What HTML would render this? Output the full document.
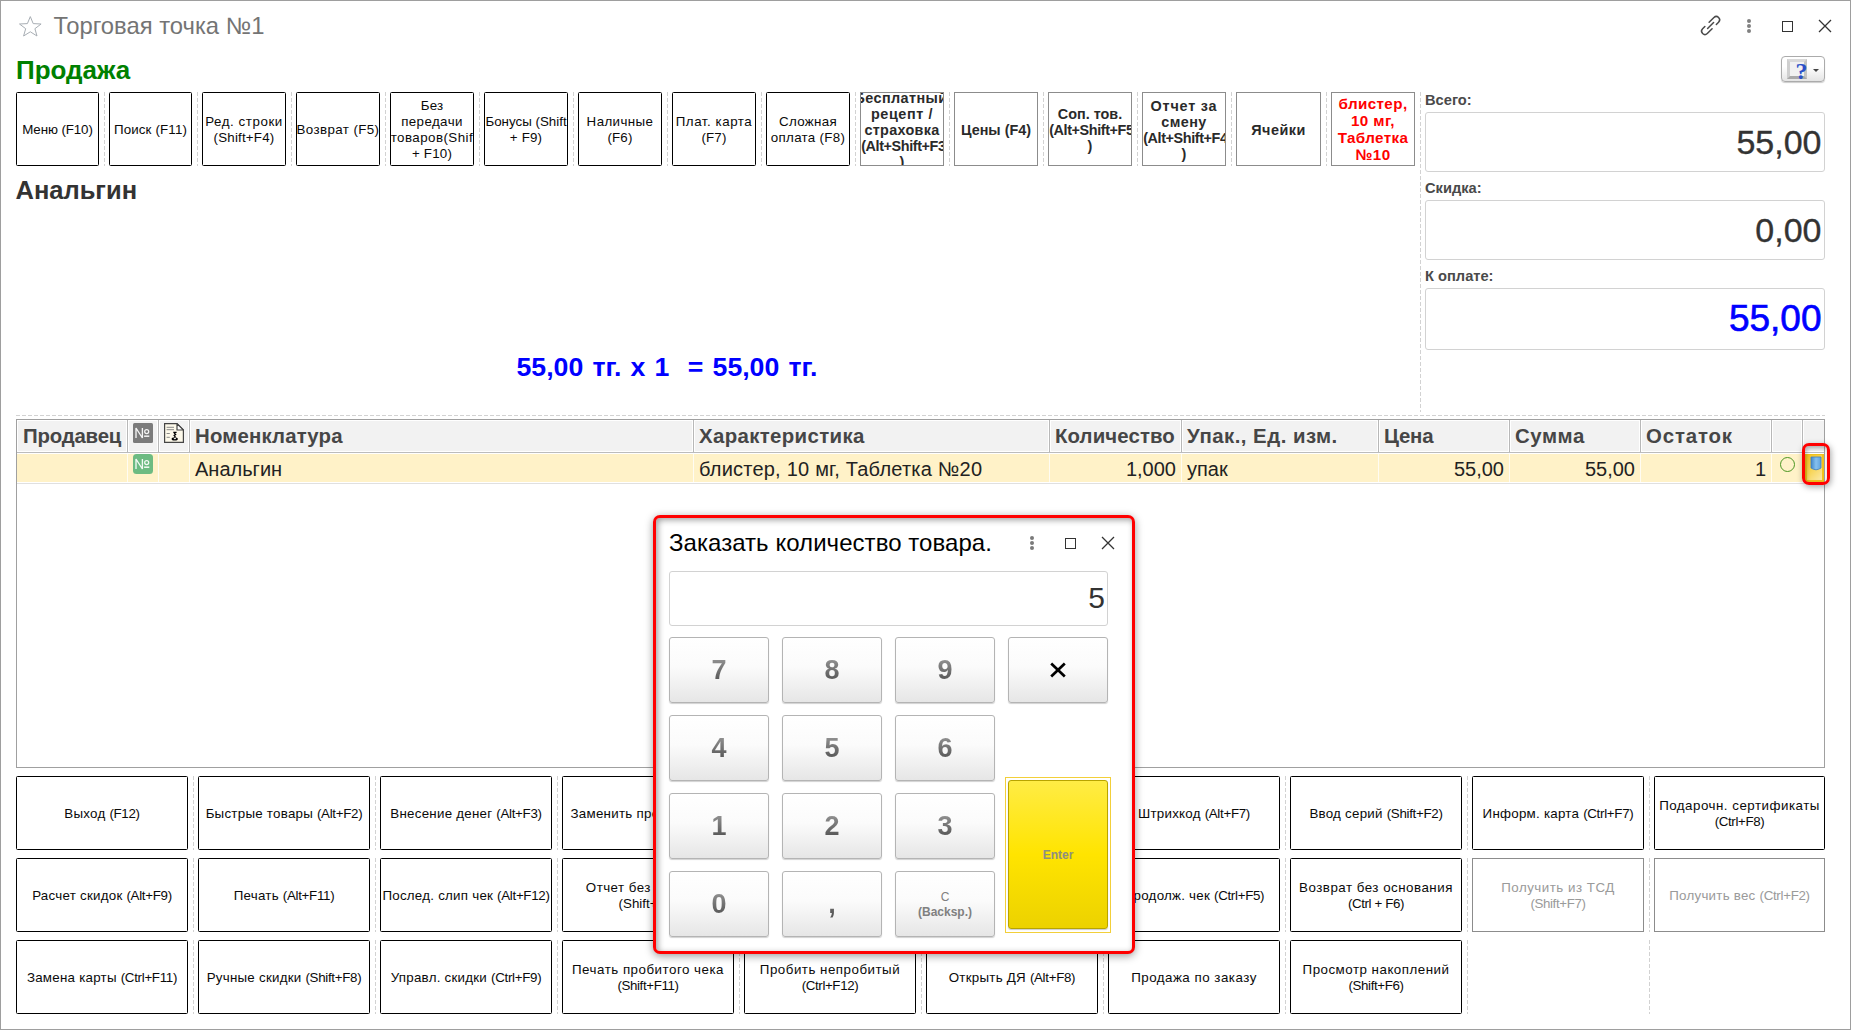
<!DOCTYPE html><html lang="ru"><head><meta charset="utf-8"><title>POS</title><style>
*{box-sizing:border-box;margin:0;padding:0}
html,body{width:1851px;height:1030px;overflow:hidden;background:#fff}
body{position:relative;font-family:"Liberation Sans",sans-serif;color:#333}
.a{position:absolute}
.t{position:absolute;white-space:pre;line-height:20px}
.tb{position:absolute;border:1px solid #000;border-radius:1.5px;background:#fff;overflow:hidden;display:flex;align-items:center;justify-content:center;text-align:center;font-size:13.33px;line-height:16px;color:#0a0a0a;white-space:nowrap;padding-top:1px}
.tb.top{padding-top:2px;letter-spacing:.2px}
.tb.top.g{letter-spacing:0;padding-top:1px}
.sh{position:relative;left:-4px}
.tb.g{border-radius:0;border-color:#8c8c8c;font-weight:bold;font-size:14.4px;color:#2a2a2a}
.tb.dis{border-radius:0;border-color:#8c8c8c;color:#9a9a9a}
.vd{position:absolute;width:1px;background:repeating-linear-gradient(to bottom,#d2d2d2 0,#d2d2d2 4px,transparent 4px,transparent 6px)}
.hd{position:absolute;height:1px;background:repeating-linear-gradient(to right,#d2d2d2 0,#d2d2d2 4px,transparent 4px,transparent 6px)}
.inp{position:absolute;border:1px solid #d2d2d2;border-radius:3px;background:#fff}
.dg{background:linear-gradient(#8e8e8e 20%,#585858 80%);-webkit-background-clip:text;background-clip:text;color:transparent;line-height:32px}
.kb{position:absolute;width:100px;height:66px;border:1px solid #b4b4b4;border-radius:3px;background:linear-gradient(#ffffff 0%,#fbfbfb 45%,#e6e6e6 100%);box-shadow:0 1px 1px rgba(0,0,0,.18);display:flex;align-items:center;justify-content:center;font-weight:bold;font-size:27px;color:#707070;text-align:center}
</style></head><body>
<div class="a" style="left:0;top:0;width:1851px;height:1030px;border:1px solid #9e9e9e"></div>
<svg class="a" style="left:18px;top:15px" width="24" height="22" viewBox="0 0 24 22"><path d="M12.3 1.6 L15.2 8.6 L23.1 9 L16.9 13.7 L19 21 L12.3 16.8 L5.6 21 L7.7 13.7 L1.5 9 L9.4 8.6 Z" fill="none" stroke="#a8aeb4" stroke-width="1"/></svg>
<div class="t" style="top:15.75px;font-size:23.8px;left:53.5px;color:#747474;">Торговая точка №1</div>
<svg class="a" style="left:1698px;top:14px" width="26" height="24" viewBox="0 0 26 24"><g transform="translate(12.6,11.5) rotate(-45)" fill="none" stroke="#4a4a4a" stroke-width="1.5" stroke-linecap="round"><path d="M1.2 -3.3 H8 A3.3 3.3 0 0 1 8 3.3 H4.8"/><path d="M-1.2 3.3 H-8 A3.3 3.3 0 0 1 -8 -3.3 H-4.8"/><path d="M-4.2 0 H4.2"/></g></svg>
<div class="a" style="left:1747px;top:18.7px;width:4px;height:4px;border-radius:50%;background:#808080"></div>
<div class="a" style="left:1747px;top:23.9px;width:4px;height:4px;border-radius:50%;background:#808080"></div>
<div class="a" style="left:1747px;top:29.1px;width:4px;height:4px;border-radius:50%;background:#808080"></div>
<div class="a" style="left:1782px;top:21px;width:11px;height:11px;border:1.3px solid #333"></div>
<svg class="a" style="left:1818px;top:19px" width="14" height="14" viewBox="0 0 14 14"><path d="M1 1 L13 13 M13 1 L1 13" stroke="#333" stroke-width="1.3" fill="none"/></svg>
<div class="a" style="left:1781px;top:56px;width:44px;height:26px;border:1px solid #ababab;border-radius:4px;background:linear-gradient(#fff 40%,#e4e4e4);box-shadow:0 1px 1px rgba(0,0,0,.2)"></div>
<div class="a" style="left:1787px;top:59px;width:20px;height:20px;background:#f1f1f1;border:3px solid;border-color:#d9d9d9 #c4c4c4 #a9a9a9 #cfcfcf"></div>
<div class="a" style="left:1795.5px;top:58.5px;font-family:'Liberation Serif',serif;font-weight:bold;font-size:24px;line-height:24px;color:#2a50c8">?</div>
<div class="a" style="left:1813px;top:69px;width:0;height:0;border-left:3px solid transparent;border-right:3px solid transparent;border-top:3px solid #444"></div>
<div class="t" style="top:59.99px;font-size:26px;left:16px;font-weight:bold;color:#008000;">Продажа</div>
<div class="tb top " style="left:16px;top:92px;width:83px;height:74px"><span><span style="letter-spacing:-0.1px;">Меню (F10)</span></span></div>
<div class="tb top " style="left:109px;top:92px;width:83px;height:74px"><span><span style="letter-spacing:0.15px;">Поиск (F11)</span></span></div>
<div class="vd" style="left:104px;top:92px;height:74px"></div>
<div class="tb top " style="left:202px;top:92px;width:84px;height:74px"><span><span style="letter-spacing:0.55px;">Ред. строки</span><br>(Shift+F4)</span></div>
<div class="vd" style="left:197px;top:92px;height:74px"></div>
<div class="tb top " style="left:296px;top:92px;width:84px;height:74px"><span><span style="letter-spacing:0.4px;">Возврат (F5)</span></span></div>
<div class="vd" style="left:291px;top:92px;height:74px"></div>
<div class="tb top " style="left:390px;top:92px;width:84px;height:74px"><span>Без<br><span style="letter-spacing:0.4px;">передачи</span><br><span style="letter-spacing:0.45px;position:relative;left:2px;">товаров(Shift</span><br>+ F10)</span></div>
<div class="vd" style="left:385px;top:92px;height:74px"></div>
<div class="tb top " style="left:484px;top:92px;width:84px;height:74px"><span><span style="letter-spacing:0.01px;">Бонусы (Shift</span><br>+ F9)</span></div>
<div class="vd" style="left:479px;top:92px;height:74px"></div>
<div class="tb top " style="left:578px;top:92px;width:84px;height:74px"><span><span style="letter-spacing:0.4px;">Наличные</span><br>(F6)</span></div>
<div class="vd" style="left:573px;top:92px;height:74px"></div>
<div class="tb top " style="left:672px;top:92px;width:84px;height:74px"><span><span style="letter-spacing:0.55px;">Плат. карта</span><br>(F7)</span></div>
<div class="vd" style="left:667px;top:92px;height:74px"></div>
<div class="tb top " style="left:766px;top:92px;width:84px;height:74px"><span><span style="letter-spacing:0.3px;">Сложная</span><br><span style="letter-spacing:0.3px;">оплата (F8)</span></span></div>
<div class="vd" style="left:761px;top:92px;height:74px"></div>
<div class="tb top g" style="left:860px;top:92px;width:84px;height:74px"><span><span style="letter-spacing:0.4px;position:relative;left:-1px;">Бесплатный</span><br><span style="letter-spacing:0.6px;">рецепт /</span><br><span style="letter-spacing:0.3px;">страховка</span><br><span style="letter-spacing:-0.39px;position:relative;left:1.4px;">(Alt+Shift+F3</span><br>)</span></div>
<div class="vd" style="left:855px;top:92px;height:74px"></div>
<div class="tb top g" style="left:954px;top:92px;width:84px;height:74px"><span>Цены (F4)</span></div>
<div class="vd" style="left:949px;top:92px;height:74px"></div>
<div class="tb top g" style="left:1048px;top:92px;width:84px;height:74px"><span>Соп. тов.<br><span style="letter-spacing:-0.39px;position:relative;left:1.4px;">(Alt+Shift+F5</span><br>)</span></div>
<div class="vd" style="left:1043px;top:92px;height:74px"></div>
<div class="tb top g" style="left:1142px;top:92px;width:84px;height:74px"><span><span style="letter-spacing:0.8px;">Отчет за</span><br><span style="letter-spacing:0.4px;">смену</span><br><span style="letter-spacing:-0.39px;position:relative;left:1.4px;">(Alt+Shift+F4</span><br>)</span></div>
<div class="vd" style="left:1137px;top:92px;height:74px"></div>
<div class="tb top g" style="left:1236px;top:92px;width:85px;height:74px"><span><span style="letter-spacing:0.5px;">Ячейки</span></span></div>
<div class="vd" style="left:1231px;top:92px;height:74px"></div>
<div class="tb top g" style="left:1331px;top:92px;width:84px;height:74px"><span><span style="color:#ff0000;font-size:15.2px;line-height:17.1px;display:block;letter-spacing:.4px;margin-top:-1px">блистер,<br>10 мг,<br>Таблетка<br>№10</span></span></div>
<div class="vd" style="left:1326px;top:92px;height:74px"></div>
<div class="t" style="top:180.16px;font-size:25.5px;left:15.5px;font-weight:bold;color:#333;">Анальгин</div>
<div class="t" style="top:356.76px;font-size:26.67px;left:516.5px;font-weight:bold;color:#0000ff;word-spacing:1.8px;">55,00 тг. х 1  = 55,00 тг.</div>
<div class="vd" style="left:1420px;top:92px;height:320px"></div>
<div class="t" style="top:89.92px;font-size:14.67px;left:1425px;font-weight:bold;color:#4a4a4a;">Всего:</div>
<div class="inp" style="left:1425px;top:112px;width:400px;height:60px"></div>
<div class="t" style="top:132.02px;font-size:34px;right:29.5px;color:#333;-webkit-text-stroke:.35px #333;">55,00</div>
<div class="t" style="top:177.92px;font-size:14.67px;left:1425px;font-weight:bold;color:#4a4a4a;">Скидка:</div>
<div class="inp" style="left:1425px;top:200px;width:400px;height:60px"></div>
<div class="t" style="top:220.02px;font-size:34px;right:29.5px;color:#333;-webkit-text-stroke:.35px #333;">0,00</div>
<div class="t" style="top:265.92px;font-size:14.67px;left:1425px;font-weight:bold;color:#4a4a4a;">К оплате:</div>
<div class="inp" style="left:1425px;top:288px;width:400px;height:62px"></div>
<div class="t" style="top:308.98px;font-size:37px;right:29.5px;color:#0000ff;-webkit-text-stroke:.65px #0000ff;">55,00</div>
<div class="hd" style="left:16px;top:415px;width:1809px"></div>
<div class="a" style="left:16px;top:419px;width:1809px;height:349px;border:1px solid #a0a0a0;background:#fff"></div>
<div class="a" style="left:18px;top:421px;width:1806px;height:30px;background:#f2f2f2"></div>
<div class="a" style="left:17px;top:454px;width:1807px;height:28px;background:#fff2c8"></div>
<div class="a" style="left:17px;top:483px;width:1807px;height:1px;background:#e0e0e0"></div>
<div class="a" style="left:126px;top:420px;width:3px;height:32px;background:#fff"></div><div class="a" style="left:127px;top:420px;width:1px;height:32px;background:#b8b8b8"></div>
<div class="a" style="left:127px;top:454px;width:1px;height:28px;background:#fffcf2"></div>
<div class="a" style="left:157px;top:420px;width:3px;height:32px;background:#fff"></div><div class="a" style="left:158px;top:420px;width:1px;height:32px;background:#b8b8b8"></div>
<div class="a" style="left:158px;top:454px;width:1px;height:28px;background:#fffcf2"></div>
<div class="a" style="left:188px;top:420px;width:3px;height:32px;background:#fff"></div><div class="a" style="left:189px;top:420px;width:1px;height:32px;background:#b8b8b8"></div>
<div class="a" style="left:189px;top:454px;width:1px;height:28px;background:#fffcf2"></div>
<div class="a" style="left:692px;top:420px;width:3px;height:32px;background:#fff"></div><div class="a" style="left:693px;top:420px;width:1px;height:32px;background:#b8b8b8"></div>
<div class="a" style="left:693px;top:454px;width:1px;height:28px;background:#fffcf2"></div>
<div class="a" style="left:1048px;top:420px;width:3px;height:32px;background:#fff"></div><div class="a" style="left:1049px;top:420px;width:1px;height:32px;background:#b8b8b8"></div>
<div class="a" style="left:1049px;top:454px;width:1px;height:28px;background:#fffcf2"></div>
<div class="a" style="left:1180px;top:420px;width:3px;height:32px;background:#fff"></div><div class="a" style="left:1181px;top:420px;width:1px;height:32px;background:#b8b8b8"></div>
<div class="a" style="left:1181px;top:454px;width:1px;height:28px;background:#fffcf2"></div>
<div class="a" style="left:1377px;top:420px;width:3px;height:32px;background:#fff"></div><div class="a" style="left:1378px;top:420px;width:1px;height:32px;background:#b8b8b8"></div>
<div class="a" style="left:1378px;top:454px;width:1px;height:28px;background:#fffcf2"></div>
<div class="a" style="left:1508px;top:420px;width:3px;height:32px;background:#fff"></div><div class="a" style="left:1509px;top:420px;width:1px;height:32px;background:#b8b8b8"></div>
<div class="a" style="left:1509px;top:454px;width:1px;height:28px;background:#fffcf2"></div>
<div class="a" style="left:1639px;top:420px;width:3px;height:32px;background:#fff"></div><div class="a" style="left:1640px;top:420px;width:1px;height:32px;background:#b8b8b8"></div>
<div class="a" style="left:1640px;top:454px;width:1px;height:28px;background:#fffcf2"></div>
<div class="a" style="left:1770px;top:420px;width:3px;height:32px;background:#fff"></div><div class="a" style="left:1771px;top:420px;width:1px;height:32px;background:#b8b8b8"></div>
<div class="a" style="left:1771px;top:454px;width:1px;height:28px;background:#fffcf2"></div>
<div class="a" style="left:1801px;top:420px;width:3px;height:32px;background:#fff"></div><div class="a" style="left:1802px;top:420px;width:1px;height:32px;background:#b8b8b8"></div>
<div class="a" style="left:1802px;top:454px;width:1px;height:28px;background:#fffcf2"></div>
<div class="a" style="left:17px;top:452px;width:1807px;height:1px;background:#bcbcbc"></div>
<div class="t" style="top:426.23px;font-size:20.4px;left:23px;font-weight:bold;color:#464646;letter-spacing:-0.2px;">Продавец</div>
<div class="t" style="top:426.23px;font-size:20.4px;left:195px;font-weight:bold;color:#464646;letter-spacing:0.16px;">Номенклатура</div>
<div class="t" style="top:426.23px;font-size:20.4px;left:699px;font-weight:bold;color:#464646;letter-spacing:0.36px;">Характеристика</div>
<div class="t" style="top:426.23px;font-size:20.4px;left:1055px;font-weight:bold;color:#464646;letter-spacing:0.11px;">Количество</div>
<div class="t" style="top:426.23px;font-size:20.4px;left:1187px;font-weight:bold;color:#464646;letter-spacing:0.48px;">Упак., Ед. изм.</div>
<div class="t" style="top:426.23px;font-size:20.4px;left:1384px;font-weight:bold;color:#464646;letter-spacing:-0.22px;">Цена</div>
<div class="t" style="top:426.23px;font-size:20.4px;left:1515px;font-weight:bold;color:#464646;letter-spacing:0.57px;">Сумма</div>
<div class="t" style="top:426.23px;font-size:20.4px;left:1646px;font-weight:bold;color:#464646;letter-spacing:0.84px;">Остаток</div>
<div class="t" style="top:459.07px;font-size:20px;left:195px;color:#222;">Анальгин</div>
<div class="t" style="top:459.07px;font-size:20px;left:699px;color:#222;letter-spacing:.22px;">блистер, 10 мг, Таблетка №20</div>
<div class="t" style="top:459.07px;font-size:20px;right:675px;color:#222;">1,000</div>
<div class="t" style="top:459.07px;font-size:20px;left:1187px;color:#222;">упак</div>
<div class="t" style="top:459.07px;font-size:20px;right:347px;color:#222;">55,00</div>
<div class="t" style="top:459.07px;font-size:20px;right:216px;color:#222;">55,00</div>
<div class="t" style="top:459.07px;font-size:20px;right:85px;color:#222;">1</div>
<div class="a" style="left:133px;top:423px;width:20px;height:20px;background:#7b7b7b;border-radius:1.5px"><svg width="20" height="20" viewBox="0 0 20 20" style="display:block"><g fill="none" stroke="#fff" stroke-opacity=".92"><path d="M3 15 V5 L9.4 15 V5" stroke-width="1.35" stroke-linejoin="bevel"/><circle cx="13.7" cy="8.6" r="2" stroke-width="1.25"/><path d="M11.1 13.2 H16.3" stroke-width="1.5"/></g></svg></div>
<div class="a" style="left:133px;top:454px;width:20px;height:20px;background:#6dbb82;border-radius:3.5px"><svg width="20" height="20" viewBox="0 0 20 20" style="display:block"><g fill="none" stroke="#fff" stroke-opacity=".92"><path d="M3 15 V5 L9.4 15 V5" stroke-width="1.35" stroke-linejoin="bevel"/><circle cx="13.7" cy="8.6" r="2" stroke-width="1.25"/><path d="M11.1 13.2 H16.3" stroke-width="1.5"/></g></svg></div>
<svg class="a" style="left:164px;top:423px" width="20" height="20" viewBox="0 0 20 20"><path d="M0.6 0.6 H13 L19.4 7 V19.4 H0.6 Z" fill="#fdf9ea" stroke="#454545" stroke-width="1.2"/><path d="M13 0.6 V7 H19.4 Z" fill="#fff" stroke="#454545" stroke-width="1.2" stroke-linejoin="round"/><path d="M2.6 4.3 H10 M2.6 6.7 H10 M2.6 10.5 H5.8 M2.6 14.3 H5.8" stroke="#8a8a8a" stroke-width="1"/><path d="M9.3 9.4 H12.6 M9.8 9.4 L11.6 11.5 L10.2 12.4 L11.4 14" stroke="#000" stroke-width="1.3" fill="none"/><ellipse cx="10.7" cy="15.9" rx="3.1" ry="1.7" fill="#000"/><ellipse cx="10.9" cy="15.6" rx="1.3" ry=".55" fill="#fff"/></svg>
<div class="a" style="left:1780px;top:457px;width:15px;height:15px;border:1.8px solid #4b9622;border-radius:50%"></div>
<div class="a" style="left:1805px;top:454px;width:19px;height:28px;background:linear-gradient(135deg,#f3c21f 0%,#f7d558 50%,#fbe9a8 100%);border:2px solid #f2c21b;border-top-width:1px"></div>
<svg class="a" style="left:1810px;top:456px" width="12" height="15" viewBox="0 0 12 15"><defs><linearGradient id="cy" x1="0" x2="1"><stop offset="0" stop-color="#3f86c9"/><stop offset=".5" stop-color="#86c0ee"/><stop offset="1" stop-color="#5fa2dc"/></linearGradient></defs><path d="M1 1 H11 V12 Q6 15.5 1 12 Z" fill="url(#cy)" stroke="#3f7fbf" stroke-width=".8"/></svg>
<div class="a" style="left:1802px;top:443px;width:28px;height:42px;border:3px solid #ff0000;border-radius:7px;box-shadow:1px 2px 6px rgba(0,0,0,.35),inset 1px 2px 4px rgba(0,0,0,.3)"></div>
<div class="tb " style="left:16px;top:776px;width:172px;height:74px"><span><span style="letter-spacing:.25px">Выход </span><span style="letter-spacing:-.3px">(F12)</span></span></div>
<div class="vd" style="left:193px;top:776px;height:74px"></div>
<div class="tb " style="left:198px;top:776px;width:172px;height:74px"><span><span style="letter-spacing:.25px">Быстрые товары </span><span style="letter-spacing:-.3px">(Alt+F2)</span></span></div>
<div class="vd" style="left:375px;top:776px;height:74px"></div>
<div class="tb " style="left:380px;top:776px;width:172px;height:74px"><span><span style="letter-spacing:.25px">Внесение денег </span><span style="letter-spacing:-.3px">(Alt+F3)</span></span></div>
<div class="vd" style="left:557px;top:776px;height:74px"></div>
<div class="tb " style="left:562px;top:776px;width:172px;height:74px"><span><span style="letter-spacing:.27px">Заменить препарат (F3)</span></span></div>
<div class="vd" style="left:739px;top:776px;height:74px"></div>
<div class="tb " style="left:744px;top:776px;width:172px;height:74px"><span><span style="letter-spacing:.25px"></span><span style="letter-spacing:-.3px">None</span></span></div>
<div class="vd" style="left:921px;top:776px;height:74px"></div>
<div class="tb " style="left:926px;top:776px;width:172px;height:74px"><span><span style="letter-spacing:.25px"></span><span style="letter-spacing:-.3px">None</span></span></div>
<div class="vd" style="left:1103px;top:776px;height:74px"></div>
<div class="tb " style="left:1108px;top:776px;width:172px;height:74px"><span><span style="letter-spacing:.25px">Штрихкод </span><span style="letter-spacing:-.3px">(Alt+F7)</span></span></div>
<div class="vd" style="left:1285px;top:776px;height:74px"></div>
<div class="tb " style="left:1290px;top:776px;width:172px;height:74px"><span><span style="letter-spacing:.25px">Ввод серий </span><span style="letter-spacing:-.3px">(Shift+F2)</span></span></div>
<div class="vd" style="left:1467px;top:776px;height:74px"></div>
<div class="tb " style="left:1472px;top:776px;width:172px;height:74px"><span><span style="letter-spacing:.25px">Информ. карта </span><span style="letter-spacing:-.3px">(Ctrl+F7)</span></span></div>
<div class="vd" style="left:1649px;top:776px;height:74px"></div>
<div class="tb " style="left:1654px;top:776px;width:171px;height:74px"><span><span style="letter-spacing:.5px">Подарочн. сертификаты</span><br><span style="letter-spacing:-.38px">(Ctrl+F8)</span></span></div>
<div class="tb " style="left:16px;top:858px;width:172px;height:74px"><span><span style="letter-spacing:.25px">Расчет скидок </span><span style="letter-spacing:-.3px">(Alt+F9)</span></span></div>
<div class="vd" style="left:193px;top:858px;height:74px"></div>
<div class="tb " style="left:198px;top:858px;width:172px;height:74px"><span><span style="letter-spacing:.25px">Печать </span><span style="letter-spacing:-.3px">(Alt+F11)</span></span></div>
<div class="vd" style="left:375px;top:858px;height:74px"></div>
<div class="tb " style="left:380px;top:858px;width:172px;height:74px"><span><span style="letter-spacing:.25px">Послед. слип чек </span><span style="letter-spacing:-.3px">(Alt+F12)</span></span></div>
<div class="vd" style="left:557px;top:858px;height:74px"></div>
<div class="tb " style="left:562px;top:858px;width:172px;height:74px"><span><span style="letter-spacing:.45px">Отчет без гашения</span><br>(Shift+F9)</span></div>
<div class="vd" style="left:739px;top:858px;height:74px"></div>
<div class="tb " style="left:744px;top:858px;width:172px;height:74px"><span><span style="letter-spacing:.25px"></span><span style="letter-spacing:-.3px">None</span></span></div>
<div class="vd" style="left:921px;top:858px;height:74px"></div>
<div class="tb " style="left:926px;top:858px;width:172px;height:74px"><span><span style="letter-spacing:.25px"></span><span style="letter-spacing:-.3px">None</span></span></div>
<div class="vd" style="left:1103px;top:858px;height:74px"></div>
<div class="tb " style="left:1108px;top:858px;width:172px;height:74px"><span><span style="letter-spacing:.25px">Продолж. чек </span><span style="letter-spacing:-.3px">(Ctrl+F5)</span></span></div>
<div class="vd" style="left:1285px;top:858px;height:74px"></div>
<div class="tb " style="left:1290px;top:858px;width:172px;height:74px"><span><span style="letter-spacing:.5px">Возврат без основания</span><br><span style="letter-spacing:-.38px">(Ctrl + F6)</span></span></div>
<div class="vd" style="left:1467px;top:858px;height:74px"></div>
<div class="tb dis" style="left:1472px;top:858px;width:172px;height:74px"><span><span style="letter-spacing:.5px">Получить из ТСД</span><br><span style="letter-spacing:-.38px">(Shift+F7)</span></span></div>
<div class="vd" style="left:1649px;top:858px;height:74px"></div>
<div class="tb dis" style="left:1654px;top:858px;width:171px;height:74px"><span><span style="letter-spacing:.25px">Получить вес </span><span style="letter-spacing:-.3px">(Ctrl+F2)</span></span></div>
<div class="tb " style="left:16px;top:940px;width:172px;height:74px"><span><span style="letter-spacing:.25px">Замена карты </span><span style="letter-spacing:-.3px">(Ctrl+F11)</span></span></div>
<div class="vd" style="left:193px;top:940px;height:74px"></div>
<div class="tb " style="left:198px;top:940px;width:172px;height:74px"><span><span style="letter-spacing:.25px">Ручные скидки </span><span style="letter-spacing:-.3px">(Shift+F8)</span></span></div>
<div class="vd" style="left:375px;top:940px;height:74px"></div>
<div class="tb " style="left:380px;top:940px;width:172px;height:74px"><span><span style="letter-spacing:.25px">Управл. скидки </span><span style="letter-spacing:-.3px">(Ctrl+F9)</span></span></div>
<div class="vd" style="left:557px;top:940px;height:74px"></div>
<div class="tb " style="left:562px;top:940px;width:172px;height:74px"><span><span style="letter-spacing:.5px">Печать пробитого чека</span><br><span style="letter-spacing:-.38px">(Shift+F11)</span></span></div>
<div class="vd" style="left:739px;top:940px;height:74px"></div>
<div class="tb " style="left:744px;top:940px;width:172px;height:74px"><span><span style="letter-spacing:.5px">Пробить непробитый</span><br><span style="letter-spacing:-.38px">(Ctrl+F12)</span></span></div>
<div class="vd" style="left:921px;top:940px;height:74px"></div>
<div class="tb " style="left:926px;top:940px;width:172px;height:74px"><span><span style="letter-spacing:.25px">Открыть ДЯ </span><span style="letter-spacing:-.3px">(Alt+F8)</span></span></div>
<div class="vd" style="left:1103px;top:940px;height:74px"></div>
<div class="tb " style="left:1108px;top:940px;width:172px;height:74px"><span><span style="letter-spacing:.5px">Продажа по заказу</span></span></div>
<div class="vd" style="left:1285px;top:940px;height:74px"></div>
<div class="tb " style="left:1290px;top:940px;width:172px;height:74px"><span><span style="letter-spacing:.5px">Просмотр накоплений</span><br><span style="letter-spacing:-.38px">(Shift+F6)</span></span></div>
<div class="vd" style="left:1467px;top:940px;height:74px"></div>
<div class="vd" style="left:1649px;top:940px;height:74px"></div>
<div class="a" style="left:653px;top:515px;width:482px;height:439px;border:3px solid #ff0000;border-radius:7px;background:#fff;box-shadow:0 2px 8px rgba(0,0,0,.4),inset 2px 2px 6px rgba(0,0,0,.38)"></div>
<div class="t" style="top:532.68px;font-size:24px;left:669px;color:#000;letter-spacing:.05px;">Заказать количество товара.</div>
<div class="a" style="left:1029.7px;top:536px;width:4px;height:4px;border-radius:50%;background:#7a7a7a"></div>
<div class="a" style="left:1029.7px;top:541px;width:4px;height:4px;border-radius:50%;background:#7a7a7a"></div>
<div class="a" style="left:1029.7px;top:546px;width:4px;height:4px;border-radius:50%;background:#7a7a7a"></div>
<div class="a" style="left:1065px;top:538px;width:11px;height:11px;border:1.3px solid #333"></div>
<svg class="a" style="left:1101px;top:536px" width="14" height="14" viewBox="0 0 14 14"><path d="M1 1 L13 13 M13 1 L1 13" stroke="#333" stroke-width="1.3" fill="none"/></svg>
<div class="inp" style="left:669px;top:571px;width:439px;height:55px"></div>
<div class="t" style="top:587.61px;font-size:30px;right:746px;color:#333;">5</div>
<div class="kb" style="left:669px;top:637px"><span class="dg">7</span></div>
<div class="kb" style="left:782px;top:637px"><span class="dg">8</span></div>
<div class="kb" style="left:895px;top:637px"><span class="dg">9</span></div>
<div class="kb" style="left:1008px;top:637px"><svg width="18" height="18" viewBox="0 0 18 18"><path d="M2.2 2.6 L15.8 15.4 M15.8 2.6 L2.2 15.4" stroke="#000" stroke-width="2.7" fill="none"/></svg></div>
<div class="kb" style="left:669px;top:715px"><span class="dg">4</span></div>
<div class="kb" style="left:782px;top:715px"><span class="dg">5</span></div>
<div class="kb" style="left:895px;top:715px"><span class="dg">6</span></div>
<div class="kb" style="left:669px;top:793px"><span class="dg">1</span></div>
<div class="kb" style="left:782px;top:793px"><span class="dg">2</span></div>
<div class="kb" style="left:895px;top:793px"><span class="dg">3</span></div>
<div class="kb" style="left:669px;top:871px"><span class="dg">0</span></div>
<div class="kb" style="left:782px;top:871px"><span class="dg">,</span></div>
<div class="kb" style="left:895px;top:871px"><span style="font-size:12px;line-height:15px;font-weight:bold;color:#808080;position:relative;top:1px"><span style="font-weight:normal">C</span><br>(Backsp.)</span></div>
<div class="a" style="left:1005px;top:777px;width:106px;height:156px;border:1px solid #f2cf3a"></div>
<div class="a" style="left:1008px;top:780px;width:100px;height:149px;border:1px solid #b8a400;border-radius:3px;background:linear-gradient(#ffec45 0%,#ffe400 50%,#ecd200 100%);box-shadow:0 1px 1px rgba(0,0,0,.2);display:flex;align-items:center;justify-content:center;font-weight:bold;font-size:12px;color:#8e8e80">Enter</div>
</body></html>
